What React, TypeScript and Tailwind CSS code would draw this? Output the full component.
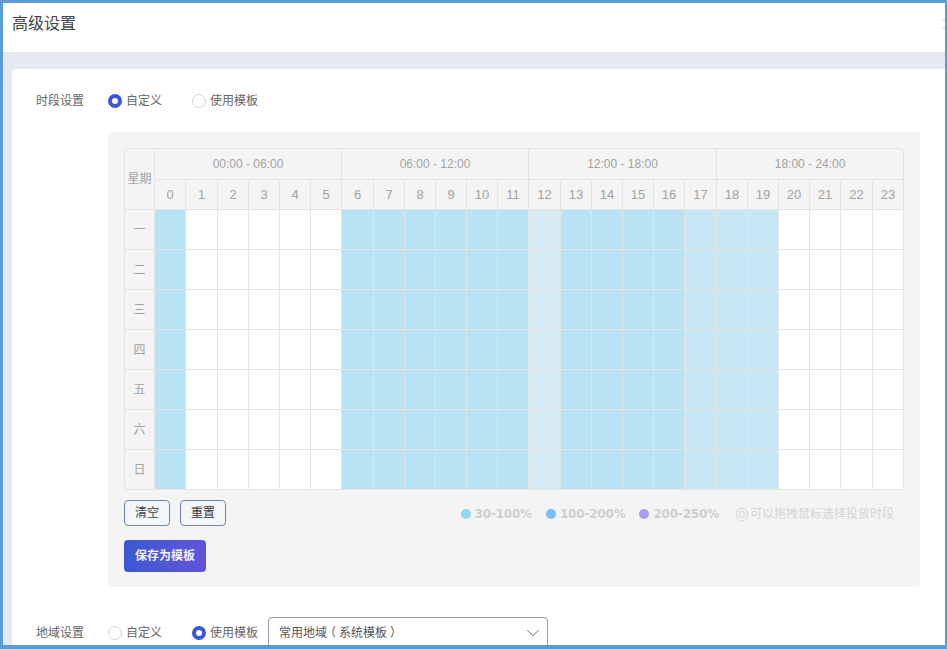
import React from 'react';
import { ChevronDown } from 'lucide-react';

const font = 'font-["Liberation_Sans","Noto_Sans_CJK_SC",sans-serif]';
const ranges = ['00:00 - 06:00', '06:00 - 12:00', '12:00 - 18:00', '18:00 - 24:00'];
const hours = Array.from({ length: 24 }, (_, i) => i);
const wideCols = [1, 6, 12, 17, 22];
const days = ['一', '二', '三', '四', '五', '六', '日'];

const cellColor = (h: number) => {
  if (h === 0 || (h >= 6 && h <= 11) || (h >= 13 && h <= 16)) return 'bg-[#b9e3f4]';
  if (h === 12) return 'bg-[#d8ecf5]';
  if (h >= 17 && h <= 19) return 'bg-[#c7e7f4]';
  return 'bg-white';
};

const colWidth = (h: number) => {
  if (h === 23) return 'w-[30px]';
  return wideCols.includes(h) ? 'w-[32px]' : 'w-[31px]';
};

const Radio = ({ label, checked }: { label: string; checked?: boolean }) => (
  <div className="flex items-center gap-[4px]">
    {checked ? (
      <span className="w-[14px] h-[14px] rounded-full border-[4px] border-[#3b58d6] bg-white" />
    ) : (
      <span className="w-[14px] h-[14px] rounded-full border border-[#d4d4d4] bg-white" />
    )}
    <span className="text-[12px] text-[#666]">{label}</span>
  </div>
);

const Legend = ({ color, label }: { color: string; label: string }) => (
  <div className="flex items-center gap-[4px]">
    <span className={`w-[10px] h-[10px] rounded-full ${color}`} />
    <span className='font-["DejaVu_Sans",sans-serif] text-[12px] tracking-[-0.2px] font-bold text-[#cfcfcf]'>{label}</span>
  </div>
);

export default function App() {
  return (
    <div className={`w-[947px] h-[649px] overflow-hidden border-[3px] border-r-[2px] border-b-[4px] border-[#5b9bd5] bg-white ${font}`}>
      {/* Header */}
      <div className="relative overflow-hidden h-[50px] bg-white border-b border-[#e4e4e4] flex items-center pl-[9px] pb-[7px]">
        <span className="text-[16px] text-[#444]">高级设置</span>
        {/* close icon, clipped by the window edge */}
        <svg className="absolute right-[-9px] top-[15px]" width="12" height="12" viewBox="0 0 12 12" stroke="#c8c8c8" strokeWidth="1">
          <path d="M1 1l10 10M11 1L1 11" />
        </svg>
      </div>

      <div className="bg-[#e6e9f0] pt-[16px] pl-[9px]">
        <div className="bg-white rounded-tl-[4px] pl-[24px] pr-[24px] pt-[22px] h-[600px]">
          {/* 时段设置 */}
          <div className="flex items-center h-[20px]">
            <span className="w-[72px] text-[12px] text-[#666]">时段设置</span>
            <div className="flex items-center gap-[30px]">
              <Radio label="自定义" checked />
              <Radio label="使用模板" />
            </div>
          </div>

          <div className="ml-[72px] mt-[21px] w-[812px] h-[455px] bg-[#f4f4f4] rounded-[4px] p-[16px]">
            <table className="table-fixed border-separate border-spacing-0 w-[780px] border border-[#e4e4e4] rounded-[4px] overflow-hidden text-[12px] text-[#a3a3a3]">
              <colgroup>
                <col className="w-[30px]" />
                {hours.map((h) => (
                  <col key={h} className={colWidth(h)} />
                ))}
              </colgroup>
              <thead>
                <tr className="h-[31px]">
                  <th rowSpan={2} className="font-normal border-r border-b border-[#e4e4e4]">星期</th>
                  {ranges.map((r, i) => (
                    <th key={r} colSpan={6} className={`font-normal border-b border-[#e4e4e4] ${i < 3 ? 'border-r' : ''}`}>
                      {r}
                    </th>
                  ))}
                </tr>
                <tr className="h-[30px]">
                  {hours.map((h) => (
                    <th key={h} className={`font-normal text-[13px] border-b border-[#e4e4e4] ${h < 23 ? 'border-r' : ''}`}>
                      {h}
                    </th>
                  ))}
                </tr>
              </thead>
              <tbody>
                {days.map((d, row) => (
                  <tr key={d} className={row < 6 ? 'h-[40px]' : 'h-[39px]'}>
                    <td className={`text-center pt-[1px] border-r border-[#e4e4e4] ${row < 6 ? 'border-b' : ''}`}>{d}</td>
                    {hours.map((h) => (
                      <td
                        key={h}
                        className={`${cellColor(h)} border-[#e4e4e4] ${row < 6 ? 'border-b' : ''} ${h < 23 ? 'border-r' : ''}`}
                      />
                    ))}
                  </tr>
                ))}
              </tbody>
            </table>

            <div className="flex items-center mt-[10px] h-[26px]">
              <button className="w-[46px] h-[26px] rounded-[4px] border border-[#6b86b5] bg-[#f3f6fb] text-[12px] text-[#444]">清空</button>
              <button className="ml-[10px] w-[46px] h-[26px] rounded-[4px] border border-[#6b86b5] bg-[#f3f6fb] text-[12px] text-[#333]">重置</button>
              <div className="ml-auto mr-[10px] flex items-center gap-[14px] mt-[2px]">
                <Legend color="bg-[#8fd8f7]" label="30-100%" />
                <Legend color="bg-[#7dbcfb]" label="100-200%" />
                <Legend color="bg-[#ab9ded]" label="200-250%" />
                <div className="flex items-center gap-[2px] ml-[3px]">
                  <svg width="12" height="15" viewBox="0 0 12 15" fill="none" stroke="#d2d2d2">
                    <ellipse cx="6" cy="7.5" rx="5.5" ry="6.5" />
                    <rect x="4" y="4" width="4" height="7" rx="2" />
                  </svg>
                  <span className="text-[12px] text-[#d4d4d4]">可以拖拽鼠标选择投放时段</span>
                </div>
              </div>
            </div>

            <button className="block mt-[14px] w-[82px] h-[32px] rounded-[4px] bg-gradient-to-r from-[#3b58d2] to-[#6054dc] text-[12px] font-bold text-[#f1f1f8]">
              保存为模板
            </button>
          </div>

          {/* 地域设置 */}
          <div className="flex items-center h-[32px] mt-[30px]">
            <span className="w-[72px] text-[12px] text-[#666]">地域设置</span>
            <div className="flex items-center gap-[30px]">
              <Radio label="自定义" />
              <Radio label="使用模板" checked />
            </div>
            <div className="ml-[10px] w-[280px] h-[32px] rounded-[4px] border border-[#9a9aa6] bg-white flex items-center justify-between pl-[10px] pr-[3px]">
              <span className="text-[12px] text-[#555]">
                常用地域<span className="inline-block -translate-x-[3px]">（</span>系统模板<span className="inline-block translate-x-[3px]">）</span>
              </span>
              <ChevronDown size={22} strokeWidth={1.1} className="text-[#8a8a96]" />
            </div>
          </div>
        </div>
      </div>
    </div>
  );
}
